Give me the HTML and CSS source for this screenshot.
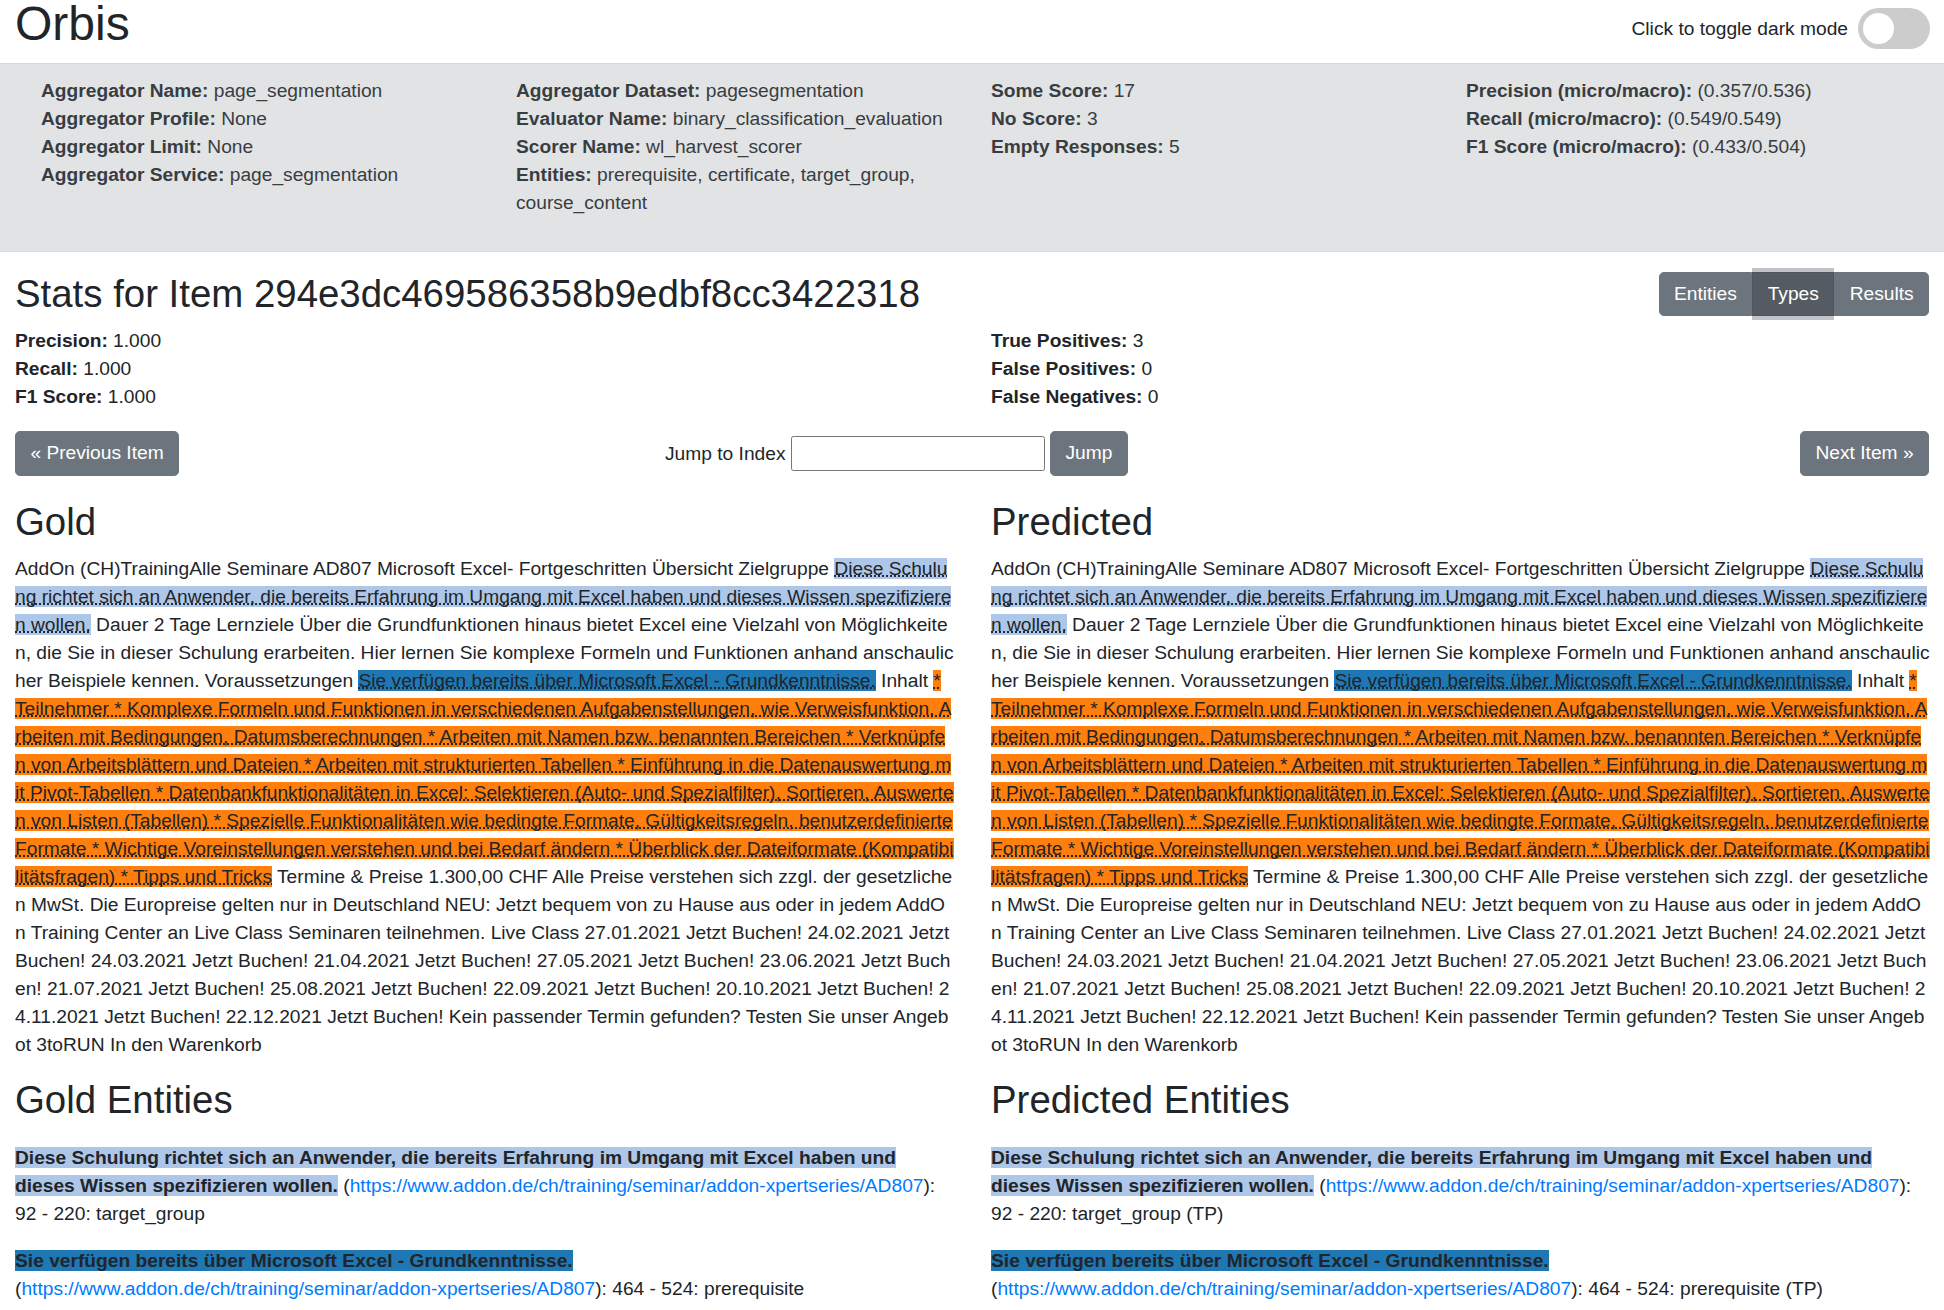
FILE: index.html
```html
<!DOCTYPE html>
<html lang="de">
<head>
<meta charset="utf-8">
<title>Orbis</title>
<link rel="stylesheet" href="styles.css">
</head>
<body>
<header class="topbar">
  <h1 class="brand">Orbis</h1>
  <label class="mode-toggle">
    <span class="mode-label">Click to toggle dark mode</span>
    <span class="switch"><span class="knob"></span></span>
  </label>
</header>

<section class="summary">
  <div class="summary-col">
    <div><b>Aggregator Name:</b> page_segmentation</div>
    <div><b>Aggregator Profile:</b> None</div>
    <div><b>Aggregator Limit:</b> None</div>
    <div><b>Aggregator Service:</b> page_segmentation</div>
  </div>
  <div class="summary-col">
    <div><b>Aggregator Dataset:</b> pagesegmentation</div>
    <div><b>Evaluator Name:</b> binary_classification_evaluation</div>
    <div><b>Scorer Name:</b> wl_harvest_scorer</div>
    <div><b>Entities:</b> prerequisite, certificate, target_group, course_content</div>
  </div>
  <div class="summary-col">
    <div><b>Some Score:</b> 17</div>
    <div><b>No Score:</b> 3</div>
    <div><b>Empty Responses:</b> 5</div>
  </div>
  <div class="summary-col">
    <div><b>Precision (micro/macro):</b> (0.357/0.536)</div>
    <div><b>Recall (micro/macro):</b> (0.549/0.549)</div>
    <div><b>F1 Score (micro/macro):</b> (0.433/0.504)</div>
  </div>
</section>

<main class="content">
  <div class="stats-head">
    <h2 class="heading">Stats for Item 294e3dc469586358b9edbf8cc3422318</h2>
    <div class="btn-group">
      <button class="btn">Entities</button><button class="btn active">Types</button><button class="btn">Results</button>
    </div>
  </div>

  <div class="two-col stats">
    <div>
      <div><b>Precision:</b> 1.000</div>
      <div><b>Recall:</b> 1.000</div>
      <div><b>F1 Score:</b> 1.000</div>
    </div>
    <div>
      <div><b>True Positives:</b> 3</div>
      <div><b>False Positives:</b> 0</div>
      <div><b>False Negatives:</b> 0</div>
    </div>
  </div>

  <div class="nav-row">
    <button class="btn">« Previous Item</button>
    <div class="jump">
      <span>Jump to Index</span>
      <input type="text" class="jump-input">
      <button class="btn">Jump</button>
    </div>
    <button class="btn next">Next Item »</button>
  </div>

  <div class="two-col docs">
    <div class="doc">
      <h2 class="heading doc-heading">Gold</h2>
      <p class="doc-text">AddOn (CH)TrainingAlle Seminare AD807 Microsoft Excel- Fortgeschritten Übersicht Zielgruppe <span class="ent tg">Diese Schulung richtet sich an Anwender, die bereits Erfahrung im Umgang mit Excel haben und dieses Wissen spezifizieren wollen.</span> Dauer 2 Tage Lernziele Über die Grundfunktionen hinaus bietet Excel eine Vielzahl von Möglichkeiten, die Sie in dieser Schulung erarbeiten. Hier lernen Sie komplexe Formeln und Funktionen anhand anschaulicher Beispiele kennen. Voraussetzungen <span class="ent pr">Sie verfügen bereits über Microsoft Excel - Grundkenntnisse.</span> Inhalt <span class="ent cc">* Teilnehmer * Komplexe Formeln und Funktionen in verschiedenen Aufgabenstellungen, wie Verweisfunktion, Arbeiten mit Bedingungen, Datumsberechnungen * Arbeiten mit Namen bzw. benannten Bereichen * Verknüpfen von Arbeitsblättern und Dateien * Arbeiten mit strukturierten Tabellen * Einführung in die Datenauswertung mit Pivot-Tabellen * Datenbankfunktionalitäten in Excel: Selektieren (Auto- und Spezialfilter), Sortieren, Auswerten von Listen (Tabellen) * Spezielle Funktionalitäten wie bedingte Formate, Gültigkeitsregeln, benutzerdefinierte Formate * Wichtige Voreinstellungen verstehen und bei Bedarf ändern * Überblick der Dateiformate (Kompatibilitätsfragen) * Tipps und Tricks</span> Termine &amp; Preise 1.300,00 CHF Alle Preise verstehen sich zzgl. der gesetzlichen MwSt. Die Europreise gelten nur in Deutschland NEU: Jetzt bequem von zu Hause aus oder in jedem AddOn Training Center an Live Class Seminaren teilnehmen. Live Class 27.01.2021 Jetzt Buchen! 24.02.2021 Jetzt Buchen! 24.03.2021 Jetzt Buchen! 21.04.2021 Jetzt Buchen! 27.05.2021 Jetzt Buchen! 23.06.2021 Jetzt Buchen! 21.07.2021 Jetzt Buchen! 25.08.2021 Jetzt Buchen! 22.09.2021 Jetzt Buchen! 20.10.2021 Jetzt Buchen! 24.11.2021 Jetzt Buchen! 22.12.2021 Jetzt Buchen! Kein passender Termin gefunden? Testen Sie unser Angebot 3toRUN In den Warenkorb</p>
      <h2 class="heading entities-heading">Gold Entities</h2>
      <p class="entity"><b class="tg">Diese Schulung richtet sich an Anwender, die bereits Erfahrung im Umgang mit Excel haben und dieses Wissen spezifizieren wollen.</b> (<a href="#">https://www.addon.de/ch/training/seminar/addon-xpertseries/AD807</a>): 92 - 220: target_group</p>
      <p class="entity"><b class="pr">Sie verfügen bereits über Microsoft Excel - Grundkenntnisse.</b> (<a href="#">https://www.addon.de/ch/training/seminar/addon-xpertseries/AD807</a>): 464 - 524: prerequisite</p>
    </div>
    <div class="doc">
      <h2 class="heading doc-heading">Predicted</h2>
      <p class="doc-text">AddOn (CH)TrainingAlle Seminare AD807 Microsoft Excel- Fortgeschritten Übersicht Zielgruppe <span class="ent tg">Diese Schulung richtet sich an Anwender, die bereits Erfahrung im Umgang mit Excel haben und dieses Wissen spezifizieren wollen.</span> Dauer 2 Tage Lernziele Über die Grundfunktionen hinaus bietet Excel eine Vielzahl von Möglichkeiten, die Sie in dieser Schulung erarbeiten. Hier lernen Sie komplexe Formeln und Funktionen anhand anschaulicher Beispiele kennen. Voraussetzungen <span class="ent pr">Sie verfügen bereits über Microsoft Excel - Grundkenntnisse.</span> Inhalt <span class="ent cc">* Teilnehmer * Komplexe Formeln und Funktionen in verschiedenen Aufgabenstellungen, wie Verweisfunktion, Arbeiten mit Bedingungen, Datumsberechnungen * Arbeiten mit Namen bzw. benannten Bereichen * Verknüpfen von Arbeitsblättern und Dateien * Arbeiten mit strukturierten Tabellen * Einführung in die Datenauswertung mit Pivot-Tabellen * Datenbankfunktionalitäten in Excel: Selektieren (Auto- und Spezialfilter), Sortieren, Auswerten von Listen (Tabellen) * Spezielle Funktionalitäten wie bedingte Formate, Gültigkeitsregeln, benutzerdefinierte Formate * Wichtige Voreinstellungen verstehen und bei Bedarf ändern * Überblick der Dateiformate (Kompatibilitätsfragen) * Tipps und Tricks</span> Termine &amp; Preise 1.300,00 CHF Alle Preise verstehen sich zzgl. der gesetzlichen MwSt. Die Europreise gelten nur in Deutschland NEU: Jetzt bequem von zu Hause aus oder in jedem AddOn Training Center an Live Class Seminaren teilnehmen. Live Class 27.01.2021 Jetzt Buchen! 24.02.2021 Jetzt Buchen! 24.03.2021 Jetzt Buchen! 21.04.2021 Jetzt Buchen! 27.05.2021 Jetzt Buchen! 23.06.2021 Jetzt Buchen! 21.07.2021 Jetzt Buchen! 25.08.2021 Jetzt Buchen! 22.09.2021 Jetzt Buchen! 20.10.2021 Jetzt Buchen! 24.11.2021 Jetzt Buchen! 22.12.2021 Jetzt Buchen! Kein passender Termin gefunden? Testen Sie unser Angebot 3toRUN In den Warenkorb</p>
      <h2 class="heading entities-heading">Predicted Entities</h2>
      <p class="entity"><b class="tg">Diese Schulung richtet sich an Anwender, die bereits Erfahrung im Umgang mit Excel haben und dieses Wissen spezifizieren wollen.</b> (<a href="#">https://www.addon.de/ch/training/seminar/addon-xpertseries/AD807</a>): 92 - 220: target_group (TP)</p>
      <p class="entity"><b class="pr">Sie verfügen bereits über Microsoft Excel - Grundkenntnisse.</b> (<a href="#">https://www.addon.de/ch/training/seminar/addon-xpertseries/AD807</a>): 464 - 524: prerequisite (TP)</p>
    </div>
  </div>
</main>
</body>
</html>
```

FILE: styles.css
```css
html {
  scrollbar-width: none;
}

body {
  margin: 0;
  font-family: "Liberation Sans", Arial, Helvetica, sans-serif;
  font-size: 19.2px;
  line-height: 28px;
  color: #212529;
  background: #fff;
}

b {
  font-weight: 700;
}

a {
  color: #007bff;
  text-decoration: none;
}

/* ---------- top bar ---------- */
.topbar {
  display: flex;
  justify-content: space-between;
  align-items: flex-start;
  height: 63px;
  padding: 0 14px 0 15px;
}

.brand {
  margin: -4.7px 0 0;
  font-size: 48px;
  line-height: 57.6px;
  font-weight: 500;
}

.mode-toggle {
  display: flex;
  align-items: center;
  gap: 10px;
  margin-top: 8px;
}

.switch {
  display: flex;
  align-items: center;
  box-sizing: border-box;
  width: 72px;
  height: 41px;
  padding-left: 5px;
  border-radius: 21px;
  background: #ccc;
}

.knob {
  width: 31px;
  height: 31px;
  border-radius: 50%;
  background: #fff;
}

/* ---------- summary band ---------- */
.summary {
  display: grid;
  grid-template-columns: repeat(4, 437px);
  column-gap: 38px;
  padding: 13px 41px 34px;
  background: #e2e3e5;
  border-top: 1px solid #d6d8db;
  border-bottom: 1px solid #d6d8db;
  color: #383d41;
}

/* ---------- main ---------- */
.content {
  padding: 0 15px;
}

.heading {
  margin: 0;
  font-size: 38.4px;
  line-height: 46px;
  font-weight: 500;
}

.stats-head {
  display: flex;
  justify-content: space-between;
  align-items: flex-start;
  padding-top: 18.5px;
}

.btn-group {
  display: flex;
  margin-top: 1.3px;
}

.btn {
  font: inherit;
  line-height: 28.2px;
  color: #fff;
  background: #6c757d;
  border: 1.2px solid #6c757d;
  padding: 7.2px 14.4px;
  border-radius: 4.8px;
  cursor: pointer;
}

.btn-group .btn {
  border-radius: 0;
}

.btn-group .btn:first-child {
  border-radius: 4.8px 0 0 4.8px;
}

.btn-group .btn:last-child {
  border-radius: 0 4.8px 4.8px 0;
}

.btn.active {
  background: #545b62;
  border-color: #4e555b;
  box-shadow: 0 -4px 0 rgba(130, 138, 145, 0.5), 0 4px 0 rgba(130, 138, 145, 0.5);
}

.two-col {
  display: grid;
  grid-template-columns: 940px 940px;
  column-gap: 36px;
  margin-right: -2px;
}

.stats {
  margin-top: 10px;
}

.nav-row {
  display: grid;
  grid-template-columns: 650px auto 1fr;
  align-items: center;
  margin-top: 20.8px;
}

.nav-row > .btn:first-child {
  justify-self: start;
}

.next {
  justify-self: end;
}

.jump {
  display: flex;
  align-items: center;
  gap: 5.3px;
}

.jump-input {
  box-sizing: border-box;
  width: 254px;
  height: 35px;
  padding: 1px 3px;
  font: inherit;
  border: 1.2px solid #767676;
  border-radius: 2.4px;
  background: #fff;
}

.docs {
  margin-top: 23.4px;
}

.doc {
  min-width: 0;
}

.doc-heading {
  margin-bottom: 9.7px;
}

.doc-text {
  margin: 0 0 18.3px;
  word-break: break-all;
}

.ent {
  text-decoration: underline dotted;
  text-decoration-skip-ink: none;
}

.tg {
  background: #aec7e8;
}

.pr {
  background: #1f77b4;
}

.cc {
  background: #ff7f0e;
}

.entities-heading {
  margin-bottom: 20.3px;
}

.entity {
  margin: 0 0 19.2px;
}
```
